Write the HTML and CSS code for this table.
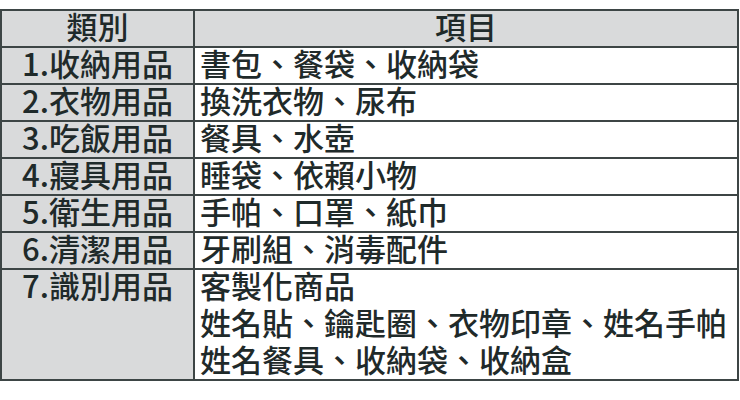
FILE: index.html
```html
<!DOCTYPE html>
<html lang="zh-Hant">
<head>
<meta charset="utf-8">
<link rel="stylesheet" href="styles.css">
</head>
<body>
<table class="list">
  <colgroup><col class="c-cat"><col class="c-item"></colgroup>
  <thead>
    <tr><th class="cat">類別</th><th class="head-item">項目</th></tr>
  </thead>
  <tbody>
    <tr><td class="cat">1.收納用品</td><td class="item">書包、餐袋、收納袋</td></tr>
    <tr><td class="cat">2.衣物用品</td><td class="item">換洗衣物、尿布</td></tr>
    <tr><td class="cat">3.吃飯用品</td><td class="item">餐具、水壺</td></tr>
    <tr><td class="cat">4.寢具用品</td><td class="item">睡袋、依賴小物</td></tr>
    <tr><td class="cat">5.衛生用品</td><td class="item">手帕、口罩、紙巾</td></tr>
    <tr><td class="cat">6.清潔用品</td><td class="item">牙刷組、消毒配件</td></tr>
    <tr class="multi"><td class="cat">7.識別用品</td><td class="item"><div class="ln">客製化商品</div><div class="ln">姓名貼、鑰匙圈、衣物印章、姓名手帕</div><div class="ln">姓名餐具、收納袋、收納盒</div></td></tr>
  </tbody>
</table>
</body>
</html>
```
FILE: styles.css
```css
html, body {
  margin: 0;
  padding: 0;
  background: #ffffff;
}
body {
  padding-top: 9px;
  font-family: "Noto Sans CJK TC", "Noto Sans", sans-serif;
  color: #1f2a2a;
}
.list {
  border-collapse: collapse;
  table-layout: fixed;
  width: 739px;
  font-size: 31px;
  font-weight: 500;
}
.c-cat { width: 193px; }
.list th, .list td {
  border: 2px solid #3d4545;
  padding: 0 0 5px 0;
  line-height: 30px;
  font-weight: 500;
  vertical-align: top;
  white-space: nowrap;
}
.list th { background: #d9dadb; text-align: center; }
.list td.cat { background: #d9dadb; text-align: center; }
.list td.item { background: #ffffff; text-align: left; padding-left: 5px; }
.multi td.item .ln + .ln { margin-top: 7px; }
```
